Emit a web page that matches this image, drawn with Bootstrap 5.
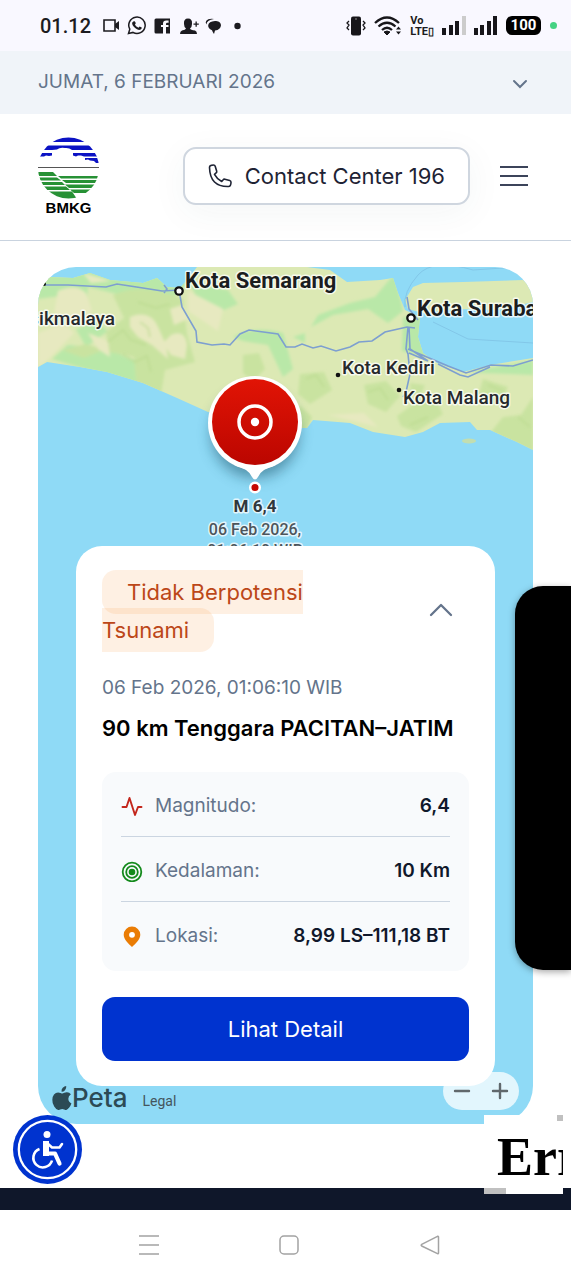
<!DOCTYPE html>
<html lang="id">
<head>
<meta charset="utf-8">
<meta name="viewport" content="width=device-width, initial-scale=1">
<title>BMKG – Gempabumi</title>
<link href="https://cdn.jsdelivr.net/npm/bootstrap@5.3.0/dist/css/bootstrap.min.css" rel="stylesheet">
<style>
  body { font-family: Inter, "Liberation Sans", sans-serif; background: #fff; color: #0f172a; overflow-x: hidden; }
  svg { display: block; flex: none; }
  .status-bar { height: 51px; padding: 0 14px 0 40px; background: #f9f8ff; color: #1c1b20; font: 500 20px/24px Roboto, sans-serif; }
  .clock { margin-right: 12px; }
  .volte { font: 700 11px/11px Roboto, sans-serif; }
  .battery { width: 35px; height: 19px; border-radius: 6px; background: #000; color: #fff; font: 700 15px/19px Roboto, sans-serif; }
  .dot-live { width: 7px; height: 7px; margin-left: 9px; background: #45d283; }
  .date-bar { height: 63px; padding: 0 38px 2px; background: #f0f4f9; color: #64748b; font-size: 19px; line-height: 28px; }
  .site-header { height: 127px; padding: 0 43px 2px 38px; border-bottom: 1px solid #c9d3df; }
  .logo-text { font: 700 15px/17px "Liberation Sans", Arial, sans-serif; color: #000; }
  .btn-call { height: 58px; gap: 13px; padding: 0 23px; border: 2px solid #cfd6df; border-radius: 13px; background: #fff; color: #1e2334; font-size: 22px; line-height: 30px; box-shadow: 0 8px 36px rgba(30, 70, 80, .05); }
  .header-tools { gap: 30px; }
  .btn-plain { padding: 0; border: 0; background: none; color: #3c445a; }
  .map-wrap { padding: 26px 38px 64px; }
  .map-box { border-radius: 38px; background: #8fdaf6; padding: 279px 38px 38px; }
  .map-art { inset: 0; width: 100%; height: 100%; }
  .map-art text { font-family: Roboto, sans-serif; paint-order: stroke; stroke: #fff; stroke-opacity: .75; stroke-width: 3px; stroke-linejoin: round; }
  .map-art .city-lg { font-size: 22px; font-weight: 700; fill: #1b1d20; }
  .map-art .city-sm { font-size: 19px; font-weight: 500; fill: #26292c; }
  .map-art .stamp { font-size: 16px; font-weight: 500; fill: #4c555b; }
  .quake { border-radius: 26px; background: #fff; padding: 27px 26px 25px; }
  .warn-wrap { max-width: 250px; font-size: 22px; line-height: 38px; }
  .warn { padding: 9px 25px; border-radius: 14px; background: rgba(249, 160, 80, .16); color: #bc4718; }
  .when { font-size: 19px; line-height: 30px; color: #64748b; }
  .where { margin: 10px 0 29px; font-size: 22px; line-height: 30px; font-weight: 600; color: #000; }
  .facts { margin-bottom: 26px; border-radius: 14px; background: #f8fafc; padding: 0 19px 5px; font-size: 19px; line-height: 30px; }
  .fact { padding: 19px 0 15px; border-bottom: 1px solid #cbd5e1; }
  .fact:last-child { border-bottom: 0; }
  .fact dt { font-weight: 400; color: #64748b; gap: 12px; }
  .fact dd { font-weight: 600; color: #10182b; }
  .btn-detail { height: 64px; border: 0; border-radius: 13px; background: #0033cf; color: #fff; font-size: 22px; }
  .attribution { left: 14px; bottom: 9px; gap: 15px; color: #2c4a55; }
  .brand-name { font-size: 26px; line-height: 34px; font-weight: 500; }
  .attribution a { margin-top: 6px; font: 400 14px/20px Roboto, sans-serif; color: #44555d; }
  .zoom-pill { right: 14px; bottom: 14px; width: 76px; height: 38px; padding: 0 10px; border-radius: 19px; background: rgba(255, 255, 255, .74); }
  .zoom-pill .btn-plain { color: #60686c; }
  .side-panel { right: 0; top: 345px; width: 56px; height: 384px; border-radius: 28px 0 0 28px; background: #000; box-shadow: 0 2px 7px rgba(0, 0, 0, .35); }
  .a11y { left: 13px; bottom: 4px; width: 69px; height: 69px; background: #0033cf; }
  .frame-peek { right: 8px; bottom: -6px; width: 79px; height: 79px; padding: 12px 0 0 13px; overflow: hidden; background: linear-gradient(#c0c0c0, #c0c0c0) right top / 6px 6px no-repeat, linear-gradient(#c0c0c0, #c0c0c0) left bottom / 22px 6px no-repeat, #fff; font: 700 54px/60px "Liberation Serif", serif; color: #000; }
  .site-footer { height: 22px; background: #0f172a; }
  .system-nav { height: 70px; padding: 0 71px 0 79px; }
</style>
</head>
<body class="d-flex flex-column min-vh-100">

<div class="status-bar d-flex align-items-center justify-content-between">
  <div class="d-flex align-items-center">
    <span class="clock">01.12</span>
    <svg width="140" height="20" viewBox="0 0 140 20" fill="#1c1b20">
      <path d="M1 4h11v11H1z" fill="none" stroke="#1c1b20" stroke-width="1.600"/><path d="M12 8l4-3v9l-4-3z"/>
      <path d="M25.500 17.500l1.300-4.300A8.200 8.200 0 1 1 30 16.400z" fill="none" stroke="#1c1b20" stroke-width="1.500"/>
      <path d="M30.400 5.500c1-.8 1.700-.3 2.300 1.500.2.700-.5 1.100-.8 1.600.8 1.500 2 2.600 3.500 3.100l1.200-1.200c1.700.6 2.400 1.100 2.100 1.700-.8 1.900-2.600 2.100-4.700 1.100-2.600-1.200-4.800-3.900-4.900-6 0-.7.500-1.300 1.300-1.800z"/>
      <path d="M53 2.500h14v15h-4V11h2.500V9H63V8q0-1.300 1.300-1.300h1.300V4.500h-2.300Q60 4.500 60 7.500V9h-2v2h2v6.500h-7q-1.500 0-1.500-1.500V4q0-1.500 1.500-1.500z"/>
      <path d="M81 8q-.5-5.500 4-5.500T89 8q0 3-2 4.500 .5 1.500 5 2 2 .7 2 3.500H77q0-2.800 2-3.500 3.500-.5 4-2Q81 11 81 8zM90.500 7.500h2v-2h1.300v2h2v1.300h-2v2h-1.300v-2h-2z"/>
      <path d="M112 5c8-1 8 9 0 9.500l-1 3.500q-1.500-2-2-3.700C103.500 12 103.500 5.500 112 5zM103.500 8.500Q103.500 4 111 3q-6-.7-7.700 1.800Q102 6.500 103.500 8.500z"/>
      <circle cx="134.500" cy="10" r="3.200"/>
    </svg>
  </div>
  <div class="d-flex align-items-center">
    <svg width="20" height="22" viewBox="0 0 20 22" fill="none" stroke="#17161a"><rect x="5" y="1.500" width="10" height="19" rx="2" fill="#17161a" stroke="none"/><path d="M3 6L1 8l2 2-2 3 2 2M17 6l2 2-2 2 2 3-2 2" stroke-width="1.300"/><circle cx="10" cy="4" r=".8" fill="#999" stroke="none"/></svg>
    <svg class="ms-2" width="28" height="22" viewBox="0 0 28 22" fill="none" stroke="#17161a" stroke-width="2.300"><path d="M1 8Q13-3 25 8M4.500 11.500q8.500-7.500 17 0M8 15q5-4.500 10 0"/><path d="M10 17q3-2 6 0l-3 3z" fill="#17161a" stroke-width="1"/><path d="M22 14.500l2.500-3 2.500 3zM22 16.500l2.500 3 2.500-3z" fill="#17161a" stroke="none"/></svg>
    <div class="volte ms-2">Vo<br>LTE▯</div>
    <svg class="ms-2" width="56" height="20" viewBox="0 0 56 20" fill="#17161a"><path d="M0 12h4v7H0zM7 9h4v10H7zM13 5h4v14h-4zM32 12h4v7h-4zM38 9h4v10h-4zM45 5h4v14h-4zM51 0h4v19h-4z"/><path d="M20 0h4v19h-4z" fill="#ccc"/></svg>
    <div class="battery ms-2 text-center">100</div>
    <div class="dot-live rounded-circle"></div>
  </div>
</div>

<div class="date-bar d-flex align-items-center justify-content-between">
  <span>JUMAT, 6 FEBRUARI 2026</span>
  <button class="btn-plain" type="button" aria-label="Buka info tanggal"><svg width="26" height="20" viewBox="0 0 26 20" fill="none" stroke="#64748b" stroke-width="2" stroke-linecap="round"><path d="M7 9l6 6 6-6"/></svg></button>
</div>

<header class="site-header d-flex align-items-center justify-content-between">
  <a class="text-decoration-none text-center" href="#" aria-label="BMKG">
    <svg width="61" height="62" viewBox="0 0 61 62">
      <defs><clipPath id="globe"><circle cx="30.500" cy="31" r="30.500"/></clipPath></defs>
      <g clip-path="url(#globe)">
        <path d="M0 0h61v5H0zM0 8.500h61v4.500H34q-3-2.500-7-2-5-1-8 1.500L14 13H0zM35 16h26v3.500H46l-3-1h-3l-2 1-3-1zM0 16h14v2.500l-3 .5-3-.5-2 1H0zM47 21h14v5h-3l-2-2-4-.5-2-1-3 .5z" fill="#0b12c4"/>
        <path d="M0 35h15l4 4H0zM20 39h41v2.500H23zM0 40.500h19l4 3H0zM24 43h37v3H28zM0 45h24l3 3H0zM27 47.500h34V51H31zM0 49.500h28l4 3.500H0zM32 52.500h29V56H36zM0 54.500h34l5 7.500H0z" fill="#279135"/>
      </g>
      <path d="M0 30.500h61" stroke="#555" stroke-width="1.200"/>
    </svg>
    <div class="logo-text">BMKG</div>
  </a>
  <div class="header-tools d-flex align-items-center">
    <a class="btn-call d-flex align-items-center text-decoration-none" href="tel:196">
      <svg width="24" height="24" viewBox="0 0 24 24" fill="none" stroke="#1e2334" stroke-width="1.600" stroke-linejoin="round"><path d="M1.500 3.500Q1.500 1 5.500 1q1.300 0 1.700 1.200l1.500 5q.3 1-.6 1.700L6.500 10.300Q9 15 13.700 17.500l1.500-1.800q.6-.8 1.700-.5l4.800 1.400q1.300.4 1.300 1.700 0 4.200-2.500 4.200Q2 23 1.500 3.500z"/></svg>
      Contact Center 196
    </a>
    <button class="btn-plain" type="button" aria-label="Menu"><svg width="28" height="22" viewBox="0 0 28 22" stroke="currentColor" stroke-width="2.200"><path d="M0 2h28M0 11h28M0 20h28"/></svg></button>
  </div>
</header>

<main class="map-wrap position-relative flex-grow-1">
  <section class="map-box position-relative overflow-hidden">
    <svg class="map-art position-absolute" viewBox="0 0 495 857" preserveAspectRatio="xMinYMin slice" role="img" aria-label="Peta lokasi gempa">
      <defs>
        <linearGradient id="red" x2="0" y2="1"><stop stop-color="#e11405"/><stop offset="1" stop-color="#bb0600"/></linearGradient>
        <filter id="shade" x="-40%" y="-40%" width="180%" height="180%"><feGaussianBlur stdDeviation="7"/></filter>
        <filter id="relief"><feGaussianBlur stdDeviation="1.500"/></filter>
        <clipPath id="java"><path d="M0 5L12 10 35 11 52 6 72 13 105 16 119 11 129 20 142 21 149 13 159 0H269L292 3 309 15 342 13 355 11 360 26 367 43 382 50 380 70 385 86 399 96 425 105 452 98 495 91V183L479 175 452 163 439 163 432 155 402 156 385 165 367 170 335 165 312 156 275 153 269 161 240 160 170 145 139 131 105 116 69 105 42 100 9 95 0 100z"/></clipPath>
      </defs>
      <g clip-path="url(#java)">
        <path d="M0 0h495v190H0z" fill="#dce9b4"/>
        <g filter="url(#relief)">
          <path d="M0 0L160 8 135 30 100 32 50 20 48 50 30 28 0 32zM14 92L30 78 70 82 100 95 122 118 90 115zM152 15l38 8 10 14-14 6-25-6zM38 62l20-8 12 10-22 16zM280 48l32-12 25-6 20-24 8 38-15 12-20-14-35 6-22 12zM365 50h20l3 40-24-6zM195 70q20-12 50-4l10 36-10 8-15-32-25-4zM0 0h30v20H0zM430 105l65-12v15l-50-2zM255 70l12-4v10z" fill="#b9e8a8"/>
          <path d="M75 28q30-14 70 4l4 35 8 28-30 8-5 30-24-18-2-25-25-5-3-20 18-14zM205 88l16-2 6 16-12 12-10-8zM262 107l24-2 8 18-22 14-12-10zM326 118l22-4 14 15-14 16-18-8zM445 112l25 8-8 18-22-8zM378 165l-15-6-4-10 22-16 18 2 6 12zM495 130v60l-42-25 12-15 18-2zM24 83l24-6 18 6-20 8zM262 138l12 12-8 18-14-4zM372 116l15 2-4 10-10-2z" fill="#c9e3a0"/>
          <path d="M20 24q18-8 28 2l6 18-12 10-26-8zM0 66l26-10 10 10-24 25-12 10zM92 50q20-8 28 10l8 18 2 14-16-14-14-8-8-10zM132 42l12-4 6 14-14 6zM133 68q14-6 16 10l-2 14-14-4-8-12zM50 66l20 8 2 16-12-8zM150 24l35 18-5 22-30-20zM45 6l28 8-20 2zM340 160l-50-12 36-2z" fill="#e7e9c0"/>
        </g>
        <g fill="none" stroke="#b9d88d" stroke-opacity=".6" stroke-width="2" filter="url(#relief)"><path d="M70 75l15-12 8 10 15 5M85 87l12 8 12-6 4 16M100 35l18 6 14-4M268 112l10-4 8 12M330 125l12-4 8 12M450 118l15 6M480 150l12 10M372 158l18-8M102 55l8 6 2 9"/></g>
      </g>
      <path d="M367 33L375 20 385 16 425 15 485 13 495 20V35L460 43 420 42 385 46 370 42z" fill="#dce9b4"/><ellipse cx="431" cy="174" rx="7" ry="2.500" fill="#c2deb0"/>
      <path d="M367 40Q365 25 380 8T435 3L480 0M395 55l35 17 65 4" fill="none" stroke="#83c7e8"/>
      <g fill="none" stroke="#7d9fd0" stroke-width="1.600">
        <path d="M7 18L30 18 68 20 79 17 105 21 124 24 141 23 144 40 158 64 159 75 174 78 186 77 192 78 202 67 211 63 240 67 248 80 257 80 264 77 275 81 283 79 298 84 312 80 321 75 334 74 347 65 369 60 377 61M369 30l2 12 9 11M370 60l-2 22 2 5 2 20-4 18-3 5M371 60l1 22 18 12-19-8M370 82l40 17 18 7 25-8 22 1 20-6M400 97l22 11 8 2 22-10M126 18l3 4-3 4"/>
      </g>
      <g fill="#fff" stroke="#111" stroke-width="2.300"><circle cx="141" cy="24" r="3.700"/><circle cx="373" cy="51" r="3.700"/></g><g fill="#111"><circle cx="300" cy="108" r="2.300"/><circle cx="361" cy="123" r="2.300"/><circle cx="6" cy="17" r="2"/></g>
      <text class="city-lg" x="147" y="21">Kota Semarang</text>
      <text class="city-lg" x="379" y="49">Kota Surabaya</text>
      <text class="city-sm" x="77" y="58" text-anchor="end">Tasikmalaya</text>
      <text class="city-sm" x="304" y="107">Kota Kediri</text>
      <text class="city-sm" x="365" y="137">Kota Malang</text>
      <circle cx="217" cy="167" r="44" fill="#174b60" opacity=".5" filter="url(#shade)"/>
      <circle cx="217" cy="156" r="47" fill="#fff"/><path d="M196 198Q211 202 214 210q3 5 6 0 3-8 18-12z" fill="#fff"/>
      <circle cx="217" cy="155" r="43" fill="url(#red)"/>
      <circle cx="217" cy="155" r="16" fill="none" stroke="#fff" stroke-width="3.500"/><circle cx="217" cy="155" r="4.200" fill="#fff"/>
      <circle cx="217" cy="220.500" r="4.800" fill="#c50800" stroke="#fff" stroke-width="2.500"/>
      <text x="217" y="245" text-anchor="middle" font-size="17" font-weight="700" fill="#30373b">M 6,4</text>
      <text class="stamp" x="217" y="268" text-anchor="middle">06 Feb 2026,</text>
      <text class="stamp" x="217" y="289" text-anchor="middle">01:06:10 WIB</text>
    </svg>

    <div class="zoom-pill position-absolute d-flex align-items-center justify-content-between">
      <button class="btn-plain" type="button" aria-label="Perkecil"><svg width="18" height="18" viewBox="0 0 18 18" stroke="currentColor" stroke-width="2.400" stroke-linecap="round"><path d="M2 9h14"/></svg></button>
      <button class="btn-plain" type="button" aria-label="Perbesar"><svg width="18" height="18" viewBox="0 0 18 18" stroke="currentColor" stroke-width="2.400" stroke-linecap="round"><path d="M2 9h14M9 2v14"/></svg></button>
    </div>

    <article class="quake position-relative">
      <div class="d-flex align-items-center justify-content-between">
        <div class="warn-wrap"><span class="warn">Tidak Berpotensi Tsunami</span></div>
        <button class="btn-plain me-3" type="button" aria-label="Tutup rincian"><svg width="24" height="16" viewBox="0 0 24 16" fill="none" stroke="#64748b" stroke-width="2.300" stroke-linecap="round" stroke-linejoin="round"><path d="M2 12L12 2l10 10"/></svg></button>
      </div>
      <div class="when mt-4">06 Feb 2026, 01:06:10 WIB</div>
      <h1 class="where text-nowrap">90 km Tenggara PACITAN–JATIM</h1>
      <dl class="facts">
        <div class="fact d-flex justify-content-between">
          <dt class="d-flex align-items-center"><svg width="22" height="22" viewBox="0 0 22 22" fill="none" stroke="#c3261c" stroke-width="1.900" stroke-linecap="round" stroke-linejoin="round"><path d="M1.500 12h4L8.500 3l5.500 17 3-8h3.500"/></svg>Magnitudo:</dt>
          <dd class="mb-0">6,4</dd>
        </div>
        <div class="fact d-flex justify-content-between">
          <dt class="d-flex align-items-center"><svg width="22" height="22" viewBox="0 0 22 22" fill="none" stroke="#148a1c" stroke-width="1.800"><circle cx="11" cy="12" r="9.300"/><circle cx="11" cy="12" r="5.800"/><circle cx="11" cy="12" r="2.400" fill="#148a1c"/></svg>Kedalaman:</dt>
          <dd class="mb-0">10 Km</dd>
        </div>
        <div class="fact d-flex justify-content-between">
          <dt class="d-flex align-items-center"><svg width="22" height="22" viewBox="0 0 22 22" fill="#ea7c04"><path d="M11 1.500a8.300 8.300 0 0 1 8.300 8.300c0 5-5 9-8.300 12.200C7.700 18.800 2.700 14.800 2.700 9.800A8.300 8.300 0 0 1 11 1.500z"/><circle cx="11" cy="9.800" r="2.900" fill="#fff"/></svg>Lokasi:</dt>
          <dd class="mb-0">8,99 LS–111,18 BT</dd>
        </div>
      </dl>
      <button class="btn btn-detail w-100" type="button">Lihat Detail</button>
    </article>

    <div class="attribution position-absolute d-flex align-items-center">
      <span class="d-flex align-items-center"><svg width="20" height="24" viewBox="0 0 18 22" preserveAspectRatio="none" fill="currentColor"><path d="M12.800 0q.3 2.200-1.100 3.800T8.600 5.300Q8.300 3.300 9.700 1.700T12.800 0zM17 7.500q-2.300 1.500-2.300 4.200 0 3 2.800 4.300-.7 2-2 3.800T12.900 22q-.8 0-1.900-.5T9.200 21t-1.900.5-1.700.5q-1.700 0-3.600-3.100T.3 12.700q0-3 1.500-4.900t3.700-1.900q1 0 2.200.5t1.600.5q.5 0 1.800-.6T13.500 5.800q2.200.1 3.500 1.700z"/></svg><span class="brand-name">Peta</span></span>
      <a class="text-decoration-none" href="#">Legal</a>
    </div>
  </section>

  <aside class="side-panel position-absolute" aria-hidden="true"></aside>
  <button class="a11y btn-plain rounded-circle position-absolute" type="button" aria-label="Aksesibilitas">
    <svg width="69" height="69" viewBox="0 0 69 69" fill="none" stroke="#fff"><circle cx="34.500" cy="34.500" r="28.700" stroke-width="2.300"/><circle cx="34" cy="19.500" r="3.500" fill="#fff" stroke="none"/><path d="M32.500 28v10.500h9.500l4.500 10" stroke-width="4.200" stroke-linecap="round" stroke-linejoin="round"/><path d="M31 27v13h4V27z" fill="#fff" stroke-width="2"/><path d="M34 28l5 4.500h7.500l2.500-3.500" stroke-width="2.600" stroke-linecap="round" stroke-linejoin="round"/><path d="M26.500 34a9.500 9.500 0 1 0 12.500 11.500" stroke-width="2.600"/></svg>
  </button>
  <div class="frame-peek position-absolute text-nowrap">Error</div>
</main>

<footer class="site-footer"></footer>
<nav class="system-nav d-flex align-items-center justify-content-around" aria-label="Navigasi sistem">
  <button class="btn-plain" type="button" aria-label="Aplikasi terbaru"><svg width="20" height="20" viewBox="0 0 20 20" stroke="#a3a3a3" stroke-width="1.500"><path d="M0 1h20M0 10h20M0 19h20"/></svg></button>
  <button class="btn-plain" type="button" aria-label="Beranda"><svg width="20" height="20" viewBox="0 0 20 20" fill="none" stroke="#a3a3a3" stroke-width="1.500"><rect x="1" y="1" width="18" height="18" rx="4"/></svg></button>
  <button class="btn-plain" type="button" aria-label="Kembali"><svg width="20" height="20" viewBox="0 0 20 20" fill="none" stroke="#a3a3a3" stroke-width="1.500" stroke-linejoin="round"><path d="M18.500 2v16q0 1-1 .6L1.700 11q-1-.8 0-1.700L17.500 1.300q1-.3 1 .7z"/></svg></button>
</nav>

<script src="https://cdn.jsdelivr.net/npm/bootstrap@5.3.0/dist/js/bootstrap.bundle.min.js"></script>
</body>
</html>
